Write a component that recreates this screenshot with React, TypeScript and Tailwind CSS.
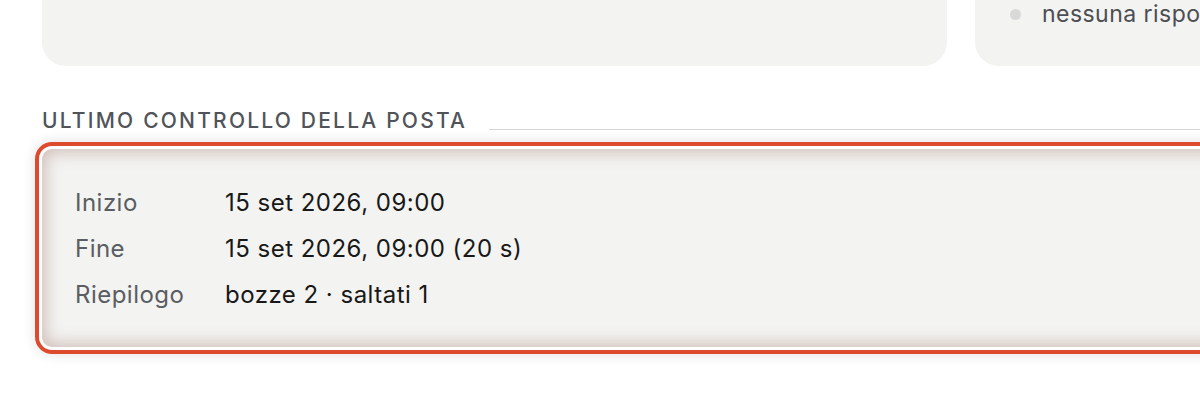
import React from "react";

const rows: [string, string][] = [
  ["Inizio", "15 set 2026, 09:00"],
  ["Fine", "15 set 2026, 09:00 (20 s)"],
  ["Riepilogo", "bozze 2 · saltati 1"],
];

export default function App() {
  return (
    <div
      className="w-[1200px] h-[400px] overflow-hidden bg-white"
      style={{ fontFamily: "Inter, 'Noto Sans', sans-serif" }}
    >
      <div className="w-[1400px] pl-[42px]">
        <div className="flex gap-[28px] h-[66px]">
          <div className="w-[905px] h-full bg-[#f3f3f1] rounded-b-[24px]" />
          <div className="w-[400px] h-full bg-[#f3f3f1] rounded-b-[24px] pl-[35px]">
            <div className="flex items-center gap-[21px] h-[28px]">
              <span className="w-[11px] h-[11px] rounded-full bg-[#d9d9d9]" />
              <span className="text-[23px] tracking-[0.02em] text-[#4b4e52] leading-[28px] whitespace-nowrap">nessuna risposta</span>
            </div>
          </div>
        </div>
        <div className="mt-[41px] flex items-end w-[1200px]">
          <span className="text-[21px] leading-[28px] tracking-[0.105em] text-[#50545a] font-medium whitespace-nowrap">
            ULTIMO CONTROLLO DELLA POSTA
          </span>
          <div className="ml-[22px] flex-1 h-[1px] bg-[#d6d6d6] mb-[5px]" />
        </div>
        <div className="mt-[14px] w-[1400px] h-[198px] rounded-[10px] bg-[#f3f3f1] pl-[33px] pt-[31px] shadow-[0_0_0_3px_#ffffff,0_0_0_7px_#de4a2e,0_0_14px_7px_rgba(0,0,0,0.12),inset_0_0_16px_3px_rgba(150,100,90,0.38)]">
          {rows.map(([k, v]) => (
            <div key={k} className="flex h-[46px] items-center text-[24px] tracking-[0.02em]">
              <span className="w-[150px] text-[#5a5d62]">{k}</span>
              <span className="text-[#181818]">{v}</span>
            </div>
          ))}
        </div>
      </div>
    </div>
  );
}
